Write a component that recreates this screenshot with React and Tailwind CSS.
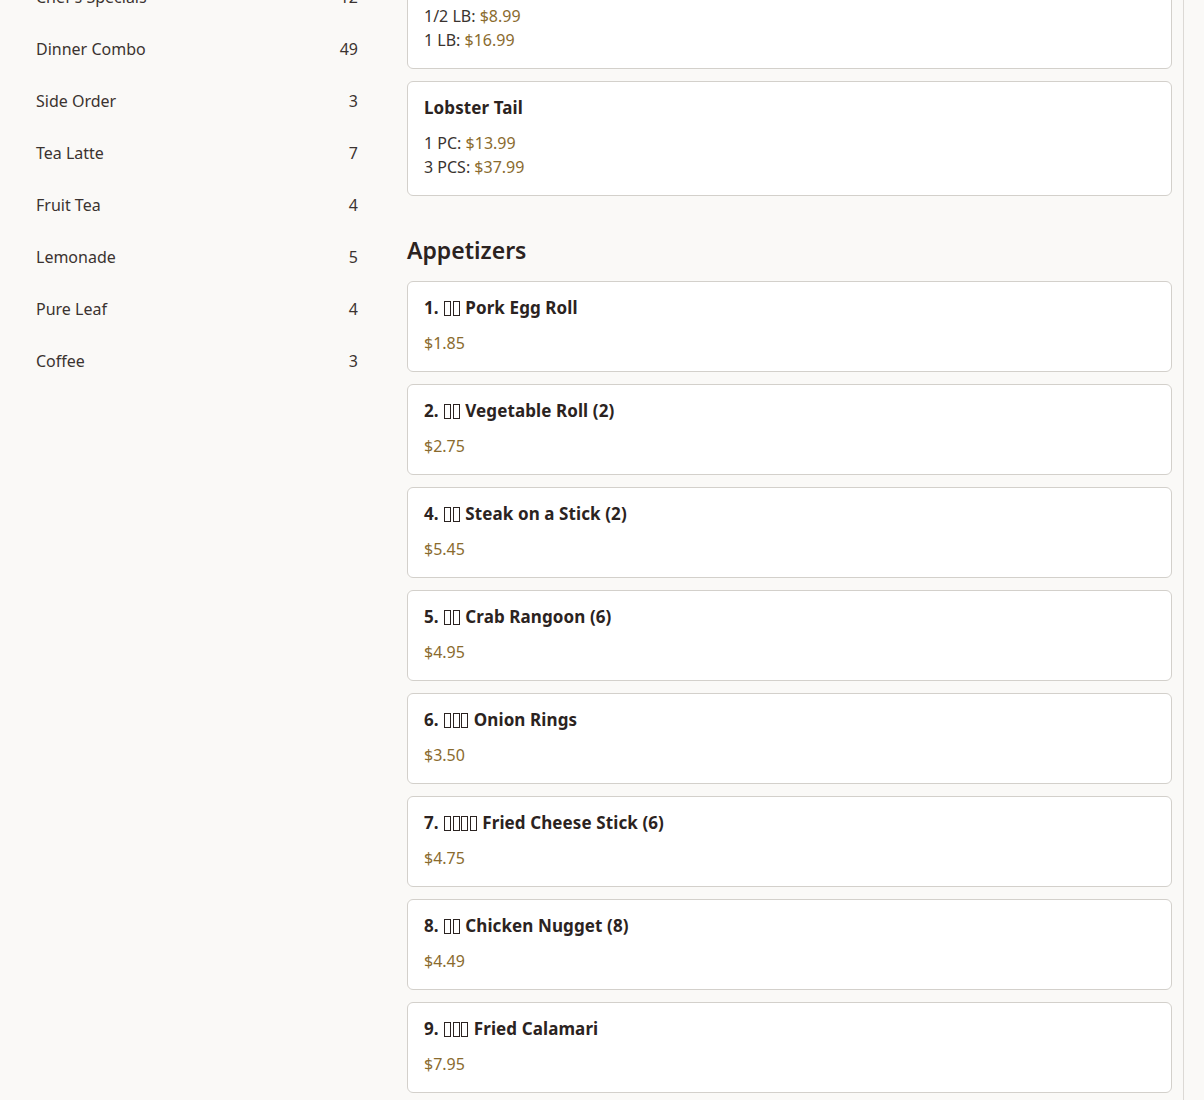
import React from "react";

const cats = [
  ["Chef's Specials", 12],
  ["Dinner Combo", 49],
  ["Side Order", 3],
  ["Tea Latte", 7],
  ["Fruit Tea", 4],
  ["Lemonade", 5],
  ["Pure Leaf", 4],
  ["Coffee", 3],
];

const apps = [
  ["1.", 2, "Pork Egg Roll", "$1.85"],
  ["2.", 2, "Vegetable Roll (2)", "$2.75"],
  ["4.", 2, "Steak on a Stick (2)", "$5.45"],
  ["5.", 2, "Crab Rangoon (6)", "$4.95"],
  ["6.", 3, "Onion Rings", "$3.50"],
  ["7.", 4, "Fried Cheese Stick (6)", "$4.75"],
  ["8.", 2, "Chicken Nugget (8)", "$4.49"],
  ["9.", 3, "Fried Calamari", "$7.95"],
  ["10.", 2, "Chicken Wings (6)", "$6.95"],
];

function Tofu({ n }) {
  return (
    <span className="inline-flex gap-[1.5px] align-[-2px] mx-[1px]">
      {Array.from({ length: n }).map((_, i) => (
        <span key={i} className="inline-block w-[7px] h-[15px] border border-[#2b2321]" />
      ))}
    </span>
  );
}

function Card({ title, lines }) {
  return (
    <div className="bg-white border border-[#d3d0cb] rounded-[6px] pt-[14px] pb-[16px] px-4">
      <div className="text-[17px] leading-6 font-bold text-[#2b2321] tracking-[0.1px]">{title}</div>
      <div className="mt-[11px]">
        {lines.map((l, i) => (
          <div key={i} className="text-[16px] leading-6 text-[#3a3330]">
            {l[0] && <span>{l[0]} </span>}
            <span className="text-[#8a6b2e]">{l[1]}</span>
          </div>
        ))}
      </div>
    </div>
  );
}

export default function App() {
  return (
    <div
      className="w-[1204px] h-[1100px] overflow-hidden bg-[#faf9f7]"
      style={{ fontFamily: '"Noto Sans", "Open Sans", sans-serif' }}
    >
      <div className="flex w-[1184px] border-r border-[#dcd9d5] min-h-full">
        <aside className="w-[383px] shrink-0 pl-9 pr-[25px] -mt-[29px]">
          {cats.map(([name, n]) => (
            <div key={name} className="h-[52px] flex items-center justify-between text-[16px] text-[#3a3330]">
              <span>{name}</span>
              <span>{n}</span>
            </div>
          ))}
        </aside>
        <main className="flex-1 pl-6 pr-[11px] -mt-[46px]">
          <div className="flex flex-col gap-3">
            <Card title="Shrimp" lines={[["1/2 LB:", "$8.99"], ["1 LB:", "$16.99"]]} />
            <Card title="Lobster Tail" lines={[["1 PC:", "$13.99"], ["3 PCS:", "$37.99"]]} />
          </div>
          <h2 className="mt-[38px] mb-[15px] text-[23px] leading-8 font-semibold text-[#2b2321]">Appetizers</h2>
          <div className="flex flex-col gap-3">
            {apps.map(([num, t, name, price]) => (
              <Card
                key={num}
                title={
                  <>
                    {num} <Tofu n={t} /> {name}
                  </>
                }
                lines={[["", price]]}
              />
            ))}
          </div>
        </main>
      </div>
    </div>
  );
}
